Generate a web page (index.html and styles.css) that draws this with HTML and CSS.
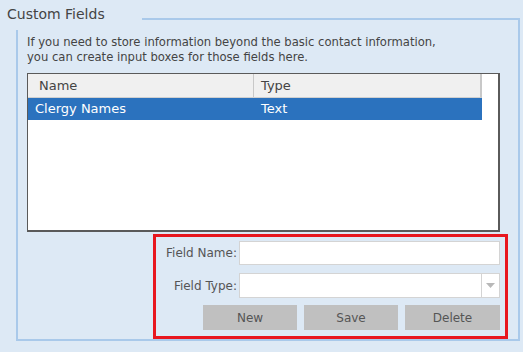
FILE: index.html
```html
<!DOCTYPE html>
<html lang="en">
  <head>
    <meta charset="UTF-8" />
    <title>Custom Fields</title>
    <link rel="stylesheet" href="styles.css">
  </head>
  <body>
    <div class="group">
      <div class="legend">Custom Fields</div>
      <p class="intro">If you need to store information beyond the basic contact information,<br>you can create input boxes for those fields here.</p>
      <div class="list">
        <div class="list-head">
          <div class="col col-name">Name</div>
          <div class="col col-type">Type</div>
        </div>
        <div class="list-row selected">
          <div class="col col-name">Clergy Names</div>
          <div class="col col-type">Text</div>
        </div>
      </div>
      <div class="editor">
        <div class="field">
          <label class="field-label">Field Name:</label>
          <input class="field-input" type="text" />
        </div>
        <div class="field">
          <label class="field-label">Field Type:</label>
          <div class="combo">
            <div class="combo-text"></div>
            <div class="combo-btn">
              <svg width="9" height="5" viewBox="0 0 9 5"><path d="M0 0 L9 0 L4.5 5 Z" fill="#b8b8b8"/></svg>
            </div>
          </div>
        </div>
        <div class="buttons">
          <button class="btn">New</button>
          <button class="btn">Save</button>
          <button class="btn">Delete</button>
        </div>
      </div>
    </div>
  </body>
</html>
```

FILE: styles.css
```css
body {
  margin: 0;
  background-color: #dde9f5;
  font-family: "DejaVu Sans", sans-serif;
  color: #4a4a4a;
}
.group {
  position: relative;
  margin: 18px 0 0 16px;
  width: 491px;
  height: 319px;
  border: 2px solid #a9c9ea;
  padding: 0 0 0 9px;
  box-sizing: content-box;
}
.legend {
  position: absolute;
  left: -18px;
  top: -20px;
  width: 142px;
  height: 30px;
  padding-left: 7px;
  box-sizing: border-box;
  background-color: #dde9f5;
  font-size: 14px;
  line-height: 28px;
  color: #444;
}
.intro {
  margin: 15px 0 0 0;
  font-size: 11.6px;
  line-height: 15px;
  color: #444;
  white-space: nowrap;
}
.list {
  margin-top: 8px;
  width: 473px;
  height: 159px;
  box-sizing: border-box;
  background-color: #fff;
  border: 1px solid #5a5a5a;
  border-right-width: 2px;
  border-bottom-width: 2px;
}
.list-head, .list-row {
  display: flex;
  width: 454px;
}
.list-head {
  height: 24px;
  background-color: #f0f0f0;
  border-bottom: 1px solid #d0d0d0;
  border-right: 2px solid #c8c8c8;
  box-sizing: border-box;
  font-size: 13px;
  line-height: 24px;
  color: #444;
}
.list-row {
  height: 22px;
  font-size: 13px;
  line-height: 22px;
}
.list-row.selected {
  background-color: #2b72be;
  color: #fff;
}
.col-name {
  width: 226px;
  padding-left: 7px;
  box-sizing: border-box;
}
.list-head .col-name {
  border-right: 1px solid #c8c8c8;
  padding-left: 11px;
}
.col-type {
  padding-left: 7px;
}
.editor {
  margin: 2px 0 0 126px;
  width: 355px;
  height: 105px;
  box-sizing: border-box;
  border: 3px solid #e8161e;
  padding: 4px 5px 0 0;
}
.field {
  display: flex;
  align-items: center;
  justify-content: flex-end;
  margin-bottom: 8px;
}
.field-label {
  font-size: 12px;
  color: #555;
  margin-right: 2px;
}
.field-input, .combo {
  width: 261px;
  height: 24px;
  box-sizing: border-box;
  border: 1px solid #d4d4d4;
  background-color: #fff;
  margin: 0;
}
.combo {
  display: flex;
  height: 25px;
}
.combo-text {
  flex: 1;
}
.combo-btn {
  width: 17px;
  border-left: 1px solid #d4d4d4;
  display: flex;
  align-items: center;
  justify-content: center;
}
.buttons {
  display: flex;
  justify-content: flex-end;
  gap: 7px;
  margin-top: -1px;
}
.btn {
  width: 94px;
  height: 25px;
  border: none;
  background-color: #c0c0c0;
  font-family: "DejaVu Sans", sans-serif;
  font-size: 12px;
  color: #555;
  padding: 0;
}
.btn:last-child {
  width: 95px;
}
```
